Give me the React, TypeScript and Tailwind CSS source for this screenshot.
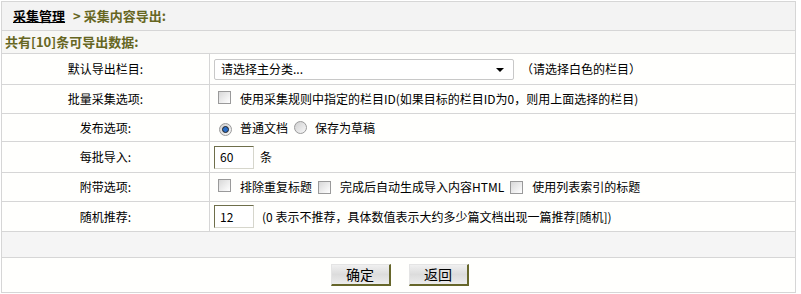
import React from "react";

const font = { fontFamily: '"Noto Sans CJK SC", "Noto Sans", sans-serif' };

function Checkbox() {
  return (
    <span className="inline-block w-[13px] h-[13px] shrink-0 border border-[#9a9a9a] bg-gradient-to-br from-[#d8d8d8] to-[#ffffff]" />
  );
}

function Radio({ checked }: { checked?: boolean }) {
  return (
    <span className="inline-flex items-center justify-center w-[13px] h-[13px] shrink-0 rounded-full border border-[#9a9a9a] bg-gradient-to-br from-[#d0d0d0] to-[#f8f8f8]">
      {checked && (
        <span className="w-[7px] h-[7px] rounded-full bg-[#2a6fc9] border border-[#222]" />
      )}
    </span>
  );
}

function TextBox({ value }: { value: string }) {
  return (
    <span className="inline-flex items-center w-[40px] h-[23px] pl-[5px] border-l border-t border-[#6e6e4a] border-r border-b border-r-[#d6d6cc] border-b-[#d6d6cc] bg-white text-[12px]">
      {value}
    </span>
  );
}

function Row({
  label,
  h,
  children,
}: {
  label: string;
  h: string;
  children: React.ReactNode;
}) {
  return (
    <div className={`flex border-b border-[#d6d6d6] ${h}`}>
      <div className="w-[208px] shrink-0 flex items-center justify-center border-r border-[#d6d6d6]">
        {label}
      </div>
      <div className="flex items-center pl-[4px] gap-[6px]">{children}</div>
    </div>
  );
}

function Button({ text }: { text: string }) {
  return (
    <span className="inline-flex items-center justify-center w-[60px] h-[22px] text-[14px] text-black border-t border-l border-[#e4e4e4] border-r-2 border-b-2 border-r-[#66662a] border-b-[#66662a] bg-gradient-to-b from-[#f0f0f0] via-[#dcdcdc] to-[#ececec]">
      {text}
    </span>
  );
}

export default function App() {
  return (
    <div className="bg-white w-[801px] h-[294px] pt-px pl-px text-[12px] text-black" style={font}>
      <div className="w-[795px] border border-[#d6d6d6] bg-[#fffffd]">
        <div className="h-[29px] flex items-center pl-[11px] border-b border-[#d6d6d6] bg-[#f3f3f3] text-[13px] font-bold">
          <span className="underline text-black">采集管理</span>
          <span className="ml-[8px] text-[#666622]">&gt; 采集内容导出:</span>
        </div>
        <div className="h-[23px] flex items-center pl-[3px] border-b border-[#d6d6d6] bg-[#f7f7f5] text-[13px] font-bold text-[#666622]">
          共有[10]条可导出数据:
        </div>
        <Row label="默认导出栏目:" h="h-[31px]">
          <span className="relative flex items-center w-[300px] h-[21px] pl-[6px] border border-[#c8c8c8] rounded-[2px] bg-white">
            请选择主分类...
            <span className="absolute right-[9px] top-[8px] w-0 h-0 border-l-[4px] border-r-[4px] border-t-[4px] border-l-transparent border-r-transparent border-t-black" />
          </span>
          <span className="ml-[1px]">（请选择白色的栏目）</span>
        </Row>
        <Row label="批量采集选项:" h="h-[29px]">
          <span className="ml-[4px]"><Checkbox /></span>
          <span className="ml-[3px]">使用采集规则中指定的栏目ID(如果目标的栏目ID为0，则用上面选择的栏目)</span>
        </Row>
        <Row label="发布选项:" h="h-[28px]">
          <span className="ml-[5px]"><Radio checked /></span>
          <span className="ml-[2px]">普通文档</span>
          <Radio />
          <span className="ml-[2px]">保存为草稿</span>
        </Row>
        <Row label="每批导入:" h="h-[31px]">
          <TextBox value="60" />
          <span>条</span>
        </Row>
        <Row label="附带选项:" h="h-[29px]">
          <span className="ml-[4px]"><Checkbox /></span>
          <span className="ml-[3px]">排除重复标题</span>
          <Checkbox />
          <span className="ml-[3px]">完成后自动生成导入内容HTML</span>
          <Checkbox />
          <span className="ml-[3px]">使用列表索引的标题</span>
        </Row>
        <Row label="随机推荐:" h="h-[30px]">
          <TextBox value="12" />
          <span className="ml-[2px]">(0 表示不推荐，具体数值表示大约多少篇文档出现一篇推荐[随机])</span>
        </Row>
        <div className="h-[26px] border-b border-[#d6d6d6] bg-[#f5f5f5]" />
        <div className="h-[34px] flex items-center justify-center gap-[18px] pl-[2px]">
          <Button text="确定" />
          <Button text="返回" />
        </div>
      </div>
    </div>
  );
}
